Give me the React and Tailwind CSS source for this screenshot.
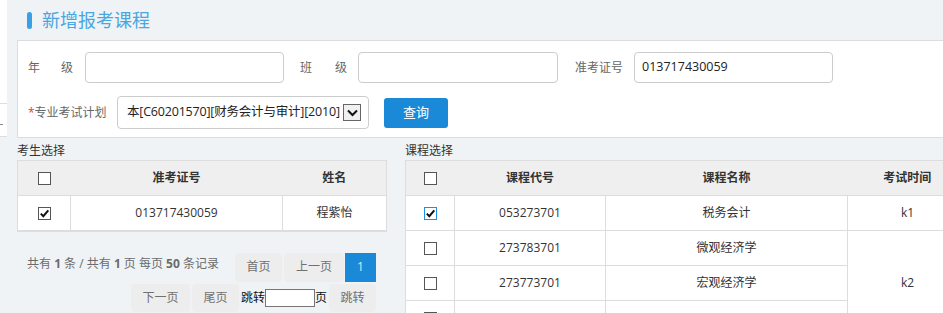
import React from 'react';

// 新增报考课程 - add exam course page

const CheckBox = ({ checked = false, focus = false }) => (
  <span
    className={`inline-flex items-center justify-center w-[13px] h-[13px] bg-white border ${
      focus ? 'border-[#1e90e0]' : 'border-[#555]'
    } align-middle`}
  >
    {checked && (
      <svg width="11" height="11" viewBox="0 0 11 11">
        <path d="M1.8 5.6 L4.3 8.2 L9.3 2.4" fill="none" stroke="#111" strokeWidth="2" />
      </svg>
    )}
  </span>
);

const PageBtn = ({ children, className = '' }) => (
  <div
    className={`h-full flex items-center justify-center rounded-[4px] bg-[#ededed] text-[#707070] text-[12px] ${className}`}
  >
    {children}
  </div>
);

const Input = ({ value = '', className = '' }) => (
  <div
    className={`h-[31px] border border-[#cccccc] rounded-[4px] bg-white flex items-center pl-[7px] text-[12.5px] text-[#222] ${className}`}
  >
    {value}
  </div>
);

const courses = [
  { code: '053273701', name: '税务会计', checked: true },
  { code: '273783701', name: '微观经济学' },
  { code: '273773701', name: '宏观经济学' },
  { code: '', name: '' },
];

export default function App() {
  return (
    <div className="w-[943px] h-[313px] overflow-hidden flex bg-[#eff3f6] font-['Open_Sans','Noto_Sans_CJK_SC',sans-serif] text-[12px] text-[#333]">
      {/* sidebar remnant */}
      <div className="w-[7px] shrink-0 flex flex-col">
        <div className="h-[104px] bg-white border-b border-[#dddddd]" />
        <div className="h-[33px] bg-white border-b border-[#dddddd] pt-[20px]">
          <div className="w-[3px] h-[1px] bg-[#888]" />
        </div>
      </div>

      <div className="flex-1 min-w-0 pl-[10px]">
        {/* title */}
        <div className="h-[40px] flex items-center">
          <span className="ml-[10px] w-[5px] h-[17px] rounded-full bg-[#3a9fe6]" />
          <span className="ml-[10px] text-[18px] leading-none text-[#4aa6e0]">新增报考课程</span>
        </div>

        {/* search form */}
        <div className="w-[960px] h-[98px] border border-[#dddddd] bg-white pl-[10px] pt-[11px] text-[#666]">
          <div className="flex items-center h-[31px]">
            <div className="w-[45px] flex justify-between">
              <span>年</span>
              <span>级</span>
            </div>
            <Input className="ml-[12px] w-[199px]" />
            <div className="ml-[16px] w-[47px] flex justify-between">
              <span>班</span>
              <span>级</span>
            </div>
            <Input className="ml-[11px] w-[200px]" />
            <div className="ml-[17px] w-[48px]">准考证号</div>
            <Input className="ml-[11px] w-[199px]" value="013717430059" />
          </div>

          <div className="flex items-center h-[33px] mt-[13px]">
            <div className="w-[89px]">
              <span className="text-[#e4393c]">*</span>专业考试计划
            </div>
            <div className="w-[252px] h-[33px] border border-[#cccccc] rounded-[4px] flex items-center justify-between pl-[9px] pr-[7px] text-[12.5px] text-[#222]">
              <span className="whitespace-nowrap overflow-hidden tracking-[-0.2px]">
                本[C60201570][财务会计与审计][2010]
              </span>
              <span className="ml-[3px] shrink-0 w-[18px] h-[17px] border border-[#666] bg-[#f0f0f0] flex items-center justify-center">
                <svg width="11" height="8" viewBox="0 0 11 8">
                  <path d="M1 1.5 L5.5 6 L10 1.5" fill="none" stroke="#111" strokeWidth="2" />
                </svg>
              </span>
            </div>
            <div className="ml-[15px] w-[64px] h-[30px] rounded-[3px] bg-[#1a8ad8] text-white text-[13px] flex items-center justify-center">
              查询
            </div>
          </div>
        </div>

        {/* lists */}
        <div className="flex pt-[4px]">
          {/* students */}
          <div className="w-[369px] shrink-0">
            <div className="h-[18px] flex items-center">考生选择</div>
            <table className="w-[369px] border-collapse border border-[#dddddd] border-b-2 table-fixed">
              <colgroup>
                <col className="w-[53px]" />
                <col className="w-[212px]" />
                <col className="w-[104px]" />
              </colgroup>
              <thead>
                <tr className="h-[35px] bg-[#efefef] font-bold">
                  <th className="border-b border-[#dddddd]">
                    <CheckBox />
                  </th>
                  <th className="border-b border-[#dddddd]">准考证号</th>
                  <th className="border-b border-[#dddddd]">姓名</th>
                </tr>
              </thead>
              <tbody>
                <tr className="h-[35px] bg-white text-center">
                  <td className="border border-[#dddddd]">
                    <CheckBox checked />
                  </td>
                  <td className="border border-[#dddddd]">013717430059</td>
                  <td className="border border-[#dddddd]">程紫怡</td>
                </tr>
              </tbody>
            </table>

            {/* pagination */}
            <div className="mt-[21px] pl-[10px] pr-[10px]">
              <div className="h-[29px] flex justify-between">
                <div className="pt-[2px] text-[#6b6b6b]">
                  共有 <b>1</b> 条 / 共有 <b>1</b> 页 每页 <b>50</b> 条记录
                </div>
                <div className="flex h-full">
                  <PageBtn className="w-[47px]">首页</PageBtn>
                  <PageBtn className="ml-[2px] w-[60px]">上一页</PageBtn>
                  <div className="ml-[1px] w-[31px] h-full bg-[#1a8ad8] text-[#d6eafa] flex items-center justify-center text-[12px]">
                    1
                  </div>
                </div>
              </div>
              <div className="mt-[2px] h-[28px] flex justify-end items-center">
                <PageBtn className="w-[59px]">下一页</PageBtn>
                <PageBtn className="ml-[2px] w-[47px]">尾页</PageBtn>
                <span className="ml-[2px] text-[#111]">跳转</span>
                <span className="w-[50px] h-[18px] border border-[#767676] bg-white" />
                <span className="text-[#111]">页</span>
                <PageBtn className="ml-[2px] w-[47px]">跳转</PageBtn>
              </div>
            </div>
          </div>

          {/* courses */}
          <div className="ml-[19px] w-[562px] shrink-0">
            <div className="h-[18px] flex items-center">课程选择</div>
            <table className="w-[562px] border-collapse border border-[#dddddd] table-fixed">
              <colgroup>
                <col className="w-[49px]" />
                <col className="w-[151px]" />
                <col className="w-[242px]" />
                <col className="w-[120px]" />
              </colgroup>
              <thead>
                <tr className="h-[35px] bg-[#efefef] font-bold">
                  <th className="border-b border-[#dddddd]">
                    <CheckBox />
                  </th>
                  <th className="border-b border-[#dddddd]">课程代号</th>
                  <th className="border-b border-[#dddddd]">课程名称</th>
                  <th className="border-b border-[#dddddd]">考试时间</th>
                </tr>
              </thead>
              <tbody>
                {courses.map((c, i) => (
                  <tr key={i} className="h-[35px] bg-white text-center">
                    <td className="border border-[#dddddd]">
                      <CheckBox checked={c.checked} focus={c.checked} />
                    </td>
                    <td className="border border-[#dddddd]">{c.code}</td>
                    <td className="border border-[#dddddd]">{c.name}</td>
                    {i === 0 && <td className="border border-[#dddddd]">k1</td>}
                    {i === 1 && (
                      <td rowSpan={4} className="border border-[#dddddd]">
                        k2
                      </td>
                    )}
                  </tr>
                ))}
              </tbody>
            </table>
          </div>
        </div>
      </div>
    </div>
  );
}
